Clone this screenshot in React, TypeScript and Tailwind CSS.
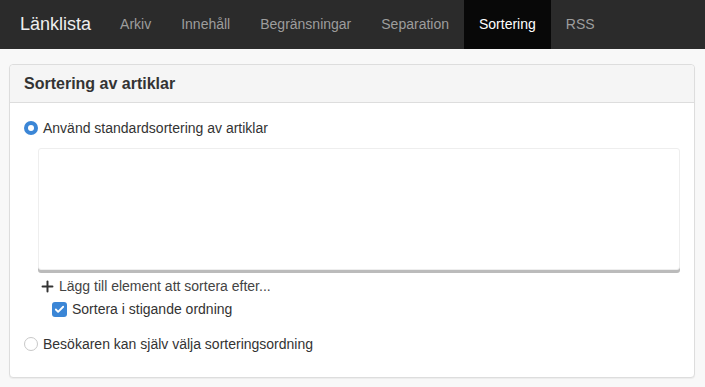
import { Check, Plus } from "lucide-react";

const navItems = ["Arkiv", "Innehåll", "Begränsningar", "Separation", "Sortering", "RSS"];

function Radio({ checked }: { checked?: boolean }) {
  if (checked) {
    return (
      <span className="flex h-[14px] w-[14px] items-center justify-center rounded-full bg-[#3b86d6]">
        <span className="h-[6px] w-[6px] rounded-full bg-white" />
      </span>
    );
  }
  return <span className="h-[14px] w-[14px] rounded-full border border-[#c8c8c8] bg-white" />;
}

export default function App() {
  return (
    <div className="min-h-[387px] bg-[#f8f8f8] font-['Liberation_Sans',Arial,sans-serif] text-[#333]">
      <nav className="flex h-[49px] items-stretch bg-[#2b2b2b]">
        <div className="flex items-center pl-5 pr-[14px] text-[18px] text-[#eee]">Länklista</div>
        {navItems.map((item) => {
          const active = item === "Sortering";
          return (
            <div
              key={item}
              className={
                active
                  ? "flex items-center bg-[#080808] px-[15px] text-[14px] text-white"
                  : "flex items-center px-[15px] text-[14px] text-[#9d9d9d]"
              }
            >
              {item}
            </div>
          );
        })}
      </nav>

      <div className="ml-[9px] mr-[10px] mt-[15px] rounded-[4px] border border-[#ddd] bg-white shadow-[0_1px_1px_rgba(0,0,0,0.05)]">
        <div className="flex h-[38px] items-center rounded-t-[4px] border-b border-[#ddd] bg-[#f5f5f5] px-[14px]">
          <h3 className="text-[16px] font-bold text-[#333]">Sortering av artiklar</h3>
        </div>

        <div className="px-[14px] pb-[23px] pt-[15px] text-[14px]">
          <label className="flex h-5 items-center gap-[5px]">
            <Radio checked />
            <span>Använd standardsortering av artiklar</span>
          </label>

          <div className="ml-[14px] mt-[10px] h-[122px] rounded-[3px] border border-[#eee] bg-white shadow-[0_3px_0_#bbb]" />

          <div className="ml-[15px] mt-[6px] flex h-5 items-center gap-[3px] text-[#444]">
            <Plus size={17} strokeWidth={2.8} className="text-[#333]" />
            <span>Lägg till element att sortera efter...</span>
          </div>

          <label className="ml-[28px] mt-[3px] flex h-5 items-center gap-[5px]">
            <span className="flex h-[15px] w-[15px] items-center justify-center rounded-[3px] bg-[#3b86d6]">
              <Check size={11} strokeWidth={4} className="text-white" />
            </span>
            <span>Sortera i stigande ordning</span>
          </label>

          <label className="mt-[15px] flex h-5 items-center gap-[5px]">
            <Radio />
            <span>Besökaren kan själv välja sorteringsordning</span>
          </label>
        </div>
      </div>
    </div>
  );
}
